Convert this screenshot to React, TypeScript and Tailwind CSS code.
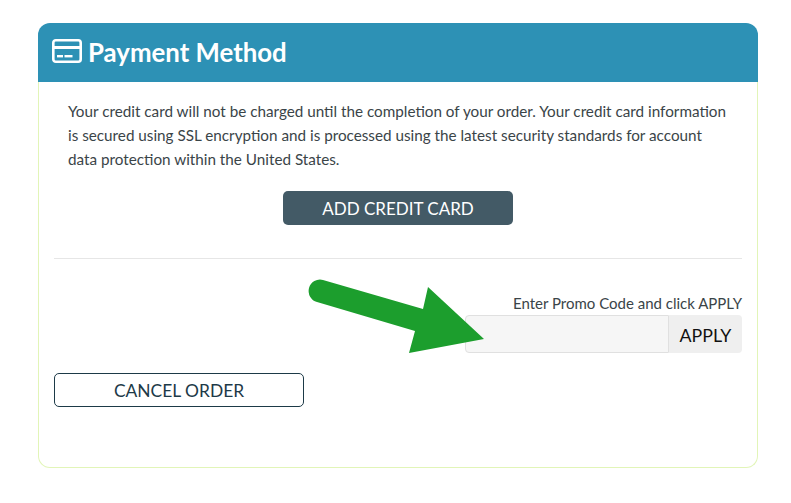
import React from "react";

export default function App() {
  return (
    <div className="relative min-h-[503px] w-[791px] bg-white pt-[23px] pl-[38px] font-['Lato','Liberation_Sans',sans-serif] text-[#3a4448]">
      <div className="w-[720px]">
        <div className="flex h-[59px] items-center gap-[6px] rounded-t-[12px] bg-[#2d91b5] pb-[3px] pl-[14px] text-white">
          <svg width="30" height="24" viewBox="0 0 30 24" fill="none" className="shrink-0">
            <rect x="1.3" y="1.3" width="27.4" height="21.4" rx="2.5" stroke="white" strokeWidth="2.6" />
            <rect x="1.5" y="7" width="27" height="3" fill="white" />
            <rect x="5" y="16" width="6" height="2.4" fill="white" />
            <rect x="12.5" y="16" width="8" height="2.4" fill="white" />
          </svg>
          <h1 className="pt-[3px] text-[25.8px] font-bold leading-none">Payment Method</h1>
        </div>
        <div className="h-[386px] rounded-b-[12px] border border-t-0 border-[#e2f5b8] px-[15px] pt-[17px]">
          <p className="pl-[14px] pr-[10px] text-[15.25px] leading-[24px]">
            Your credit card will not be charged until the completion of your order. Your credit card information is secured using SSL encryption and is processed using the latest security standards for account data protection within the United States.
          </p>
          <div className="mt-[20px] flex justify-center">
            <button className="h-[34px] w-[230px] rounded-[5px] bg-[#435a66] pt-[2px] text-[17px] text-white">ADD CREDIT CARD</button>
          </div>
          <div className="mt-[33px] h-px bg-[#e6e6e6]" />
          <div className="mt-[34px] flex flex-col items-end">
            <div className="mb-[2px] text-[15px] leading-[20px]">Enter Promo Code and click APPLY</div>
            <div className="flex h-[38px] w-[277px]">
              <input className="h-full w-[204px] rounded-l-[4px] border border-[#e0e0e0] bg-[#f6f6f6]" />
              <div className="flex h-full w-[73px] items-center justify-center rounded-r-[4px] bg-[#efefef] pt-[2px] text-[17.8px] text-[#111]">APPLY</div>
            </div>
          </div>
          <button className="mt-[20px] block h-[34px] w-[250px] rounded-[5px] border border-[#1d3a48] pt-[2px] text-[17.4px] text-[#1d3a48]">CANCEL ORDER</button>
        </div>
      </div>
      <svg className="pointer-events-none absolute left-0 top-0" width="791" height="503" viewBox="0 0 791 503">
        <path d="M323 280 L423 309 L428 287 L484 339 L409 353 L415 331 L317 302 A11 11 0 0 1 323 280 Z" fill="#1c9e2d" />
      </svg>
    </div>
  );
}
